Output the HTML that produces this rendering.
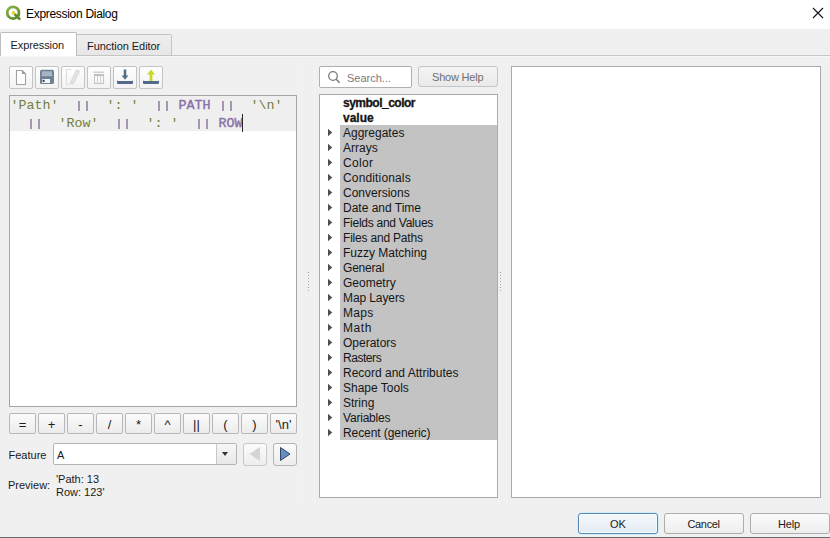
<!DOCTYPE html>
<html><head><meta charset="utf-8">
<style>
*{margin:0;padding:0;box-sizing:border-box}
html,body{width:830px;height:538px;overflow:hidden;background:#f0f0f0;font-family:"Liberation Sans",sans-serif;color:#1a1a1a}
.a{position:absolute}
.t{position:absolute;white-space:pre;line-height:1}
#title{left:0;top:0;width:830px;height:29px;background:#fff}
.btn{position:absolute;border:1px solid #adadad;border-radius:3px;background:linear-gradient(#fbfbfb,#ededed)}
.tb{position:absolute;top:66px;width:24px;height:23px;border:1px solid #c4c4c4;border-radius:2px;background:linear-gradient(#fefefe,#f3f3f3)}
.op{position:absolute;top:413px;width:27px;height:21px;border:1px solid #b8b8b8;border-radius:2px;background:linear-gradient(#fbfbfb,#ececec);font-size:13px;text-align:center;line-height:21px;color:#1a1a1a}
.row{position:absolute;left:343px;height:15px;font-size:12px;line-height:15px;padding-top:1px;white-space:pre;color:#161616}
.tri{position:absolute;left:328px;width:0;height:0;border-top:3.75px solid transparent;border-bottom:3.75px solid transparent;border-left:4.5px solid #444}
.bar{width:2px;height:10px;background:#a696b4}
.mono{font-family:"Liberation Mono",monospace;font-size:13.333px}
</style></head><body>
<!-- title bar -->
<div id="title" class="a">
  <svg class="a" style="left:0;top:0" width="28" height="28" viewBox="0 0 28 28">
    <defs><linearGradient id="qg" x1="0" y1="0" x2="0.6" y2="1"><stop offset="0" stop-color="#8cb448"/><stop offset="1" stop-color="#5c8c2c"/></linearGradient></defs>
    <circle cx="13.1" cy="12.7" r="5.9" fill="none" stroke="url(#qg)" stroke-width="2.7"/>
    <path d="M15 14.6 L19.3 18.8" stroke="#5f8f2e" stroke-width="2.8" stroke-linecap="round"/>
    <circle cx="13.4" cy="12.9" r="1.9" fill="#e6cf48"/>
  </svg>
  <div class="t" style="left:26px;top:8px;font-size:12px;letter-spacing:-0.3px;color:#000">Expression Dialog</div>
  <svg class="a" style="left:812px;top:7px" width="12" height="12" viewBox="0 0 12 12">
    <path d="M1 1 L11 11 M11 1 L1 11" stroke="#111" stroke-width="1.1"/>
  </svg>
</div>
<!-- tabs -->
<div class="a" style="left:76px;top:55px;width:754px;height:1px;background:#c6c6c6"></div><div class="a" style="left:0;top:56px;width:830px;height:1px;background:#f7f7f7"></div>
<div class="a" style="left:77px;top:34px;width:95px;height:22px;background:linear-gradient(#efefef,#e6e6e6);border:1px solid #c4c4c4;border-left:none;border-radius:0 2px 0 0"></div>
<div class="t" style="left:87px;top:41px;font-size:11px;letter-spacing:-0.05px">Function Editor</div>
<div class="a" style="left:0;top:32px;width:77px;height:24px;background:#fff;border:1px solid #bdbdbd;border-bottom:none;border-radius:2px 2px 0 0"></div>
<div class="t" style="left:10.5px;top:40px;font-size:11px;letter-spacing:-0.1px">Expression</div>

<!-- toolbar -->
<div class="tb" style="left:9px"></div>
<div class="tb" style="left:35px"></div>
<div class="tb" style="left:61px"></div>
<div class="tb" style="left:87px"></div>
<div class="tb" style="left:113px"></div>
<div class="tb" style="left:139px"></div>
<!-- new file icon -->
<svg class="a" style="left:9px;top:66px" width="24" height="23" viewBox="0 0 24 23">
  <path d="M7.5 4.5 H13 L16.5 8 V18.5 H7.5 Z" fill="#fff" stroke="#a2a2a2" stroke-width="1.1" stroke-linejoin="round"/>
  <path d="M13 4 L17 8 H13 Z" fill="#9a9a9a"/>
</svg>
<!-- save icon -->
<svg class="a" style="left:35px;top:66px" width="24" height="23" viewBox="0 0 24 23">
  <rect x="5" y="3.8" width="14" height="14.2" rx="1.6" fill="#6f8196"/>
  <rect x="7" y="5.3" width="10" height="4" fill="#a7b4c1"/>
  <rect x="6.5" y="9.3" width="11" height="0.8" fill="#c3ccd5"/>
  <rect x="7" y="13" width="8" height="4" fill="#f4f6f8"/>
  <rect x="7.6" y="13.8" width="2" height="2.2" fill="#3b4652"/>
</svg>
<!-- edit icon disabled -->
<svg class="a" style="left:61px;top:66px" width="24" height="23" viewBox="0 0 24 23">
  <path d="M10.5 3.5 H5.5 V18.5 H9" fill="none" stroke="#dedede" stroke-width="1.1"/>
  <path d="M15.5 3.5 L18.8 5.2 L12.2 18.3 L9 17.2 Z" fill="#e2e2e2" stroke="#d6d6d6" stroke-width="0.8"/>
</svg>
<!-- trash disabled -->
<svg class="a" style="left:87px;top:66px" width="24" height="23" viewBox="0 0 24 23">
  <path d="M6.5 6.2 H17" stroke="#c6c6c6" stroke-width="1.2"/>
  <rect x="7.5" y="8.5" width="9" height="9" fill="none" stroke="#c8c8c8" stroke-width="1.1"/>
  <path d="M7.5 9.2 H16.5" stroke="#bcbcbc" stroke-width="1.6"/>
  <path d="M10.5 10 V17 M13.5 10 V17" stroke="#d2d2d2" stroke-width="1"/>
</svg>
<!-- download -->
<svg class="a" style="left:113px;top:66px" width="24" height="23" viewBox="0 0 24 23">
  <path d="M12 3.5 V11" stroke="#566f88" stroke-width="2.6"/>
  <path d="M8.6 9.6 L12 13.8 L15.4 9.6 Z" fill="#566f88"/>
  <path d="M4 14.2 Q4 15 5 15 H19 Q20 15 20 14.2 V17 Q20 18 19 18 H5 Q4 18 4 17 Z" fill="#52698c"/>
</svg>
<!-- upload -->
<svg class="a" style="left:139px;top:66px" width="24" height="23" viewBox="0 0 24 23">
  <path d="M12 8 V15" stroke="#c9d62e" stroke-width="2.8"/>
  <path d="M8 8.5 L12 3.5 L16 8.5 Z" fill="#c9d62e"/>
  <path d="M4 14.2 Q4 15 5 15 H19 Q20 15 20 14.2 V17 Q20 18 19 18 H5 Q4 18 4 17 Z" fill="#52698c"/>
</svg>

<!-- editor -->
<div class="a" style="left:9px;top:95px;width:288px;height:312px;background:#fff;border:1px solid #a5a5a5"></div>
<div class="a" style="left:10px;top:96px;width:286px;height:35px;background:#efefef"></div>
<div class="t mono" style="left:10.5px;top:96.5px;line-height:18px"><span style="color:#72803a">'Path'</span>      <span style="color:#72803a">': '</span>     <b style="color:#8a6fa8;font-weight:normal;-webkit-text-stroke:0.4px #8a6fa8">PATH</b>     <span style="color:#72803a">'\n'</span>
      <span style="color:#72803a">'Row'</span>      <span style="color:#72803a">': '</span>     <b style="color:#8a6fa8;font-weight:normal;-webkit-text-stroke:0.4px #8a6fa8">ROW</b></div>
<div class="a bar" style="left:78px;top:101px"></div><div class="a bar" style="left:86px;top:101px"></div><div class="a bar" style="left:158px;top:101px"></div><div class="a bar" style="left:166px;top:101px"></div><div class="a bar" style="left:222px;top:101px"></div><div class="a bar" style="left:230px;top:101px"></div><div class="a bar" style="left:30px;top:119px"></div><div class="a bar" style="left:38px;top:119px"></div><div class="a bar" style="left:118px;top:119px"></div><div class="a bar" style="left:126px;top:119px"></div><div class="a bar" style="left:198px;top:119px"></div><div class="a bar" style="left:206px;top:119px"></div>
<div class="a" style="left:242px;top:114px;width:1px;height:18px;background:#2a2a2a"></div>

<!-- operator buttons -->
<div class="op" style="left:9px">=</div>
<div class="op" style="left:38px">+</div>
<div class="op" style="left:67px">-</div>
<div class="op" style="left:96px">/</div>
<div class="op" style="left:125px">*</div>
<div class="op" style="left:154px">^</div>
<div class="op" style="left:183px">||</div>
<div class="op" style="left:212px">(</div>
<div class="op" style="left:241px">)</div>
<div class="op" style="left:270px">'\n'</div>

<!-- feature -->
<div class="t" style="left:8.5px;top:449.5px;font-size:11px">Feature</div>
<div class="a" style="left:53px;top:443px;width:184px;height:22px;background:#fff;border:1px solid #b5b5b5;border-radius:2px"></div>
<div class="a" style="left:216px;top:444px;width:20px;height:20px;background:linear-gradient(#f6f6f6,#e8e8e8);border-left:1px solid #c8c8c8"></div>
<div class="a" style="left:222px;top:452px;width:0;height:0;border-left:3.5px solid transparent;border-right:3.5px solid transparent;border-top:4px solid #333"></div>
<div class="t" style="left:57px;top:449.5px;font-size:11px">A</div>
<div class="btn" style="left:243px;top:443px;width:24px;height:23px;border-color:#c8c8c8"></div>
<svg class="a" style="left:243px;top:443px" width="24" height="23" viewBox="0 0 24 23"><path d="M17 4 V18 L6.5 11 Z" fill="#d4d4d4"/></svg>
<div class="btn" style="left:273px;top:443px;width:24px;height:23px;border-color:#b5b5b5"></div>
<svg class="a" style="left:273px;top:443px" width="24" height="23" viewBox="0 0 24 23"><path d="M7.5 4.5 V17.5 L17 11 Z" fill="#6a8cc0" stroke="#2e4468" stroke-width="1"/></svg>

<!-- preview -->
<div class="t" style="left:8px;top:480px;font-size:11px">Preview:</div>
<div class="t" style="left:56px;top:473px;font-size:11px;line-height:13px">'Path: 13
Row: 123'</div>

<!-- splitter grips -->
<div class="a" style="left:301px;top:56px;width:1px;height:450px;background:#f3f3f3"></div>
<div class="a" style="left:314px;top:56px;width:1px;height:450px;background:#f3f3f3"></div>
<div class="a" style="left:499px;top:56px;width:1px;height:450px;background:#f3f3f3"></div>
<div class="a" style="left:506px;top:56px;width:1px;height:450px;background:#f3f3f3"></div>
<div class="a" style="left:308px;top:272px;width:1px;height:20px;background:repeating-linear-gradient(#a4a4a4 0 1px,transparent 1px 3px)"></div>
<div class="a" style="left:500px;top:272px;width:1px;height:20px;background:repeating-linear-gradient(#a4a4a4 0 1px,transparent 1px 3px)"></div>

<!-- search -->
<div class="a" style="left:319px;top:66px;width:93px;height:22px;background:#fff;border:1px solid #b0b0b0;border-radius:2px"></div>
<svg class="a" style="left:325px;top:69px" width="18" height="18" viewBox="0 0 18 18">
  <circle cx="8" cy="7" r="4.3" fill="none" stroke="#7a7a7a" stroke-width="1.3"/>
  <path d="M11 10 L14.5 13.8" stroke="#7a7a7a" stroke-width="1.5"/>
</svg>
<div class="t" style="left:347px;top:73px;font-size:11px;color:#7b7b7b">Search...</div>
<div class="btn" style="left:418px;top:66px;width:80px;height:21px;border-color:#c6c6c6;background:linear-gradient(#f4f4f4,#e9e9e9)"></div>
<div class="t" style="left:432px;top:72px;font-size:11px;color:#6e6e6e;letter-spacing:-0.2px">Show Help</div>

<!-- list -->
<div class="a" style="left:319px;top:94px;width:179px;height:404px;background:#fff;border:1px solid #ababab"></div>
<div class="a" style="left:340px;top:125px;width:157px;height:315px;background:#c3c3c3"></div>
<div class="row" style="top:95px;font-weight:bold;letter-spacing:-0.5px;-webkit-text-stroke:0.3px #111">symbol_color</div>
<div class="row" style="top:110px;font-weight:bold;-webkit-text-stroke:0.3px #111">value</div>
<svg class="a" style="left:327px;top:125px" width="8" height="15"><path d="M1 3.8 L5.2 7.5 L1 11.2 Z" fill="#4e4e4e"/></svg><div class="row" style="top:125px">Aggregates</div>
<svg class="a" style="left:327px;top:140px" width="8" height="15"><path d="M1 3.8 L5.2 7.5 L1 11.2 Z" fill="#4e4e4e"/></svg><div class="row" style="top:140px">Arrays</div>
<svg class="a" style="left:327px;top:155px" width="8" height="15"><path d="M1 3.8 L5.2 7.5 L1 11.2 Z" fill="#4e4e4e"/></svg><div class="row" style="top:155px;letter-spacing:0.3px">Color</div>
<svg class="a" style="left:327px;top:170px" width="8" height="15"><path d="M1 3.8 L5.2 7.5 L1 11.2 Z" fill="#4e4e4e"/></svg><div class="row" style="top:170px;letter-spacing:0.15px">Conditionals</div>
<svg class="a" style="left:327px;top:185px" width="8" height="15"><path d="M1 3.8 L5.2 7.5 L1 11.2 Z" fill="#4e4e4e"/></svg><div class="row" style="top:185px">Conversions</div>
<svg class="a" style="left:327px;top:200px" width="8" height="15"><path d="M1 3.8 L5.2 7.5 L1 11.2 Z" fill="#4e4e4e"/></svg><div class="row" style="top:200px">Date and Time</div>
<svg class="a" style="left:327px;top:215px" width="8" height="15"><path d="M1 3.8 L5.2 7.5 L1 11.2 Z" fill="#4e4e4e"/></svg><div class="row" style="top:215px;letter-spacing:-0.26px">Fields and Values</div>
<svg class="a" style="left:327px;top:230px" width="8" height="15"><path d="M1 3.8 L5.2 7.5 L1 11.2 Z" fill="#4e4e4e"/></svg><div class="row" style="top:230px;letter-spacing:-0.2px">Files and Paths</div>
<svg class="a" style="left:327px;top:245px" width="8" height="15"><path d="M1 3.8 L5.2 7.5 L1 11.2 Z" fill="#4e4e4e"/></svg><div class="row" style="top:245px">Fuzzy Matching</div>
<svg class="a" style="left:327px;top:260px" width="8" height="15"><path d="M1 3.8 L5.2 7.5 L1 11.2 Z" fill="#4e4e4e"/></svg><div class="row" style="top:260px;letter-spacing:-0.2px">General</div>
<svg class="a" style="left:327px;top:275px" width="8" height="15"><path d="M1 3.8 L5.2 7.5 L1 11.2 Z" fill="#4e4e4e"/></svg><div class="row" style="top:275px">Geometry</div>
<svg class="a" style="left:327px;top:290px" width="8" height="15"><path d="M1 3.8 L5.2 7.5 L1 11.2 Z" fill="#4e4e4e"/></svg><div class="row" style="top:290px;letter-spacing:-0.1px">Map Layers</div>
<svg class="a" style="left:327px;top:305px" width="8" height="15"><path d="M1 3.8 L5.2 7.5 L1 11.2 Z" fill="#4e4e4e"/></svg><div class="row" style="top:305px;letter-spacing:0.3px">Maps</div>
<svg class="a" style="left:327px;top:320px" width="8" height="15"><path d="M1 3.8 L5.2 7.5 L1 11.2 Z" fill="#4e4e4e"/></svg><div class="row" style="top:320px;letter-spacing:0.6px">Math</div>
<svg class="a" style="left:327px;top:335px" width="8" height="15"><path d="M1 3.8 L5.2 7.5 L1 11.2 Z" fill="#4e4e4e"/></svg><div class="row" style="top:335px">Operators</div>
<svg class="a" style="left:327px;top:350px" width="8" height="15"><path d="M1 3.8 L5.2 7.5 L1 11.2 Z" fill="#4e4e4e"/></svg><div class="row" style="top:350px;letter-spacing:-0.45px">Rasters</div>
<svg class="a" style="left:327px;top:365px" width="8" height="15"><path d="M1 3.8 L5.2 7.5 L1 11.2 Z" fill="#4e4e4e"/></svg><div class="row" style="top:365px">Record and Attributes</div>
<svg class="a" style="left:327px;top:380px" width="8" height="15"><path d="M1 3.8 L5.2 7.5 L1 11.2 Z" fill="#4e4e4e"/></svg><div class="row" style="top:380px">Shape Tools</div>
<svg class="a" style="left:327px;top:395px" width="8" height="15"><path d="M1 3.8 L5.2 7.5 L1 11.2 Z" fill="#4e4e4e"/></svg><div class="row" style="top:395px">String</div>
<svg class="a" style="left:327px;top:410px" width="8" height="15"><path d="M1 3.8 L5.2 7.5 L1 11.2 Z" fill="#4e4e4e"/></svg><div class="row" style="top:410px;letter-spacing:-0.2px">Variables</div>
<svg class="a" style="left:327px;top:425px" width="8" height="15"><path d="M1 3.8 L5.2 7.5 L1 11.2 Z" fill="#4e4e4e"/></svg><div class="row" style="top:425px;letter-spacing:-0.08px">Recent (generic)</div>

<!-- right panel -->
<div class="a" style="left:511px;top:66px;width:310px;height:432px;background:#fff;border:1px solid #ababab"></div>

<!-- bottom buttons -->
<div class="btn" style="left:578px;top:513px;width:80px;height:21px;border-color:#5889b4;background:linear-gradient(#f4f8fc,#e3ebf2);box-shadow:0 0 0 1px #d2eefb, inset 0 0 0 1px #fafdff"></div>
<div class="t" style="left:610px;top:519px;font-size:11px">OK</div>
<div class="btn" style="left:664px;top:513px;width:80px;height:21px"></div>
<div class="t" style="left:687.5px;top:519px;font-size:11px;letter-spacing:-0.35px">Cancel</div>
<div class="btn" style="left:750px;top:513px;width:80px;height:21px"></div>
<div class="t" style="left:778px;top:519px;font-size:11px;letter-spacing:-0.2px">Help</div>
<div class="a" style="left:0;top:537px;width:830px;height:1px;background:#6a6a6a"></div>
</body></html>
